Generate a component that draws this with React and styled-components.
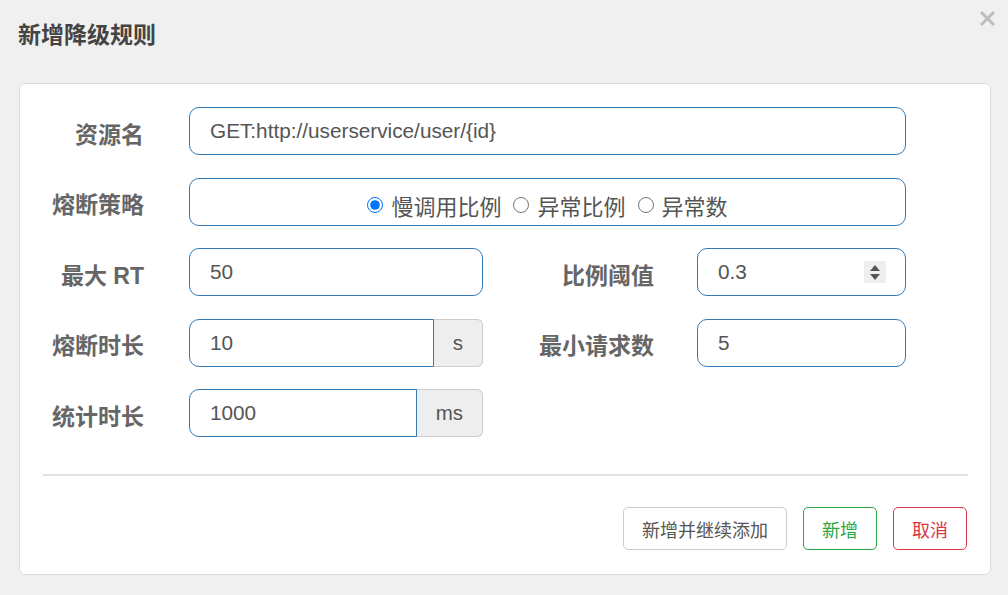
import React from 'react';
import styled, { createGlobalStyle } from 'styled-components';

const GlobalStyle = createGlobalStyle`
  html, body {
    margin: 0;
    padding: 0;
    background: #f0f0f0;
  }
  body {
    font-family: "Liberation Sans", "Noto Sans CJK SC", sans-serif;
    color: #555;
  }
  * { box-sizing: border-box; }
`;

const Page = styled.div`
  width: 1008px;
  height: 595px;
  padding: 0 12px 0 19px;
  overflow: hidden;
`;

const Header = styled.div`
  height: 83px;
  display: flex;
  justify-content: space-between;
  align-items: flex-start;
`;

const Title = styled.h3`
  margin: 20px 0 0 -1px;
  font-size: 23px;
  line-height: 30px;
  font-weight: bold;
  color: #444;
`;

const Close = styled.button`
  margin-top: 10px;
  padding: 0;
  width: 17px;
  height: 17px;
  border: none;
  background: transparent;
  cursor: pointer;
  display: flex;
`;

const Card = styled.div`
  width: 972px;
  background: #fff;
  border: 1px solid #ddd;
  border-radius: 6px;
  padding: 23px 0 24px 0;
`;

const Form = styled.div`
  display: flex;
  flex-direction: column;
  gap: 22.5px;
`;

const Row = styled.div`
  display: grid;
  grid-template-columns: 169px 294px 214px 209px;
  align-items: center;
`;

const Label = styled.label`
  text-align: right;
  padding-top: 3px;
  padding-right: ${p => p.$pad || 45}px;
  font-size: 23px;
  font-weight: bold;
  color: #666;
  white-space: nowrap;
`;

const Input = styled.input`
  width: 100%;
  height: 48px;
  border: 1px solid #337ab7;
  border-radius: ${p => (p.$grouped ? '10px 0 0 10px' : '10px')};
  padding: 0 20px;
  font-family: inherit;
  font-size: 20.75px;
  color: #555;
  background: #fff;
  outline: none;
  grid-column: ${p => (p.$wide ? '2 / 5' : 'auto')};
`;

const Group = styled.div`
  display: flex;
  height: 48px;
  position: relative;
`;

const Addon = styled.span`
  display: flex;
  align-items: center;
  padding: 0 19px;
  background: #eee;
  border: 1px solid #ccc;
  border-left: none;
  border-radius: 0 6px 6px 0;
  font-size: 20.5px;
  color: #555;
`;

const RadioBox = styled.div`
  grid-column: 2 / 5;
  height: 48px;
  border: 1px solid #337ab7;
  border-radius: 10px;
  display: flex;
  align-items: center;
  justify-content: center;
  gap: 12px;
  padding-top: 7px;
`;

const RadioItem = styled.label`
  display: flex;
  align-items: center;
  gap: 8px;
  font-size: 22px;
  color: #555;

  input {
    width: 16px;
    height: 16px;
    margin: 0;
  }
`;

const Spinner = styled.div`
  position: absolute;
  right: 20px;
  top: 13px;
  width: 22px;
  height: 22px;
  background: #efefef;
  display: flex;
  flex-direction: column;
  align-items: center;
  justify-content: center;
  gap: 3px;
`;

const Arrow = styled.span`
  width: 0;
  height: 0;
  border-left: 5px solid transparent;
  border-right: 5px solid transparent;
  ${p => (p.$down ? 'border-top: 6px solid #555;' : 'border-bottom: 6px solid #555;')}
`;

const Divider = styled.hr`
  margin: 37px 22px 0 23px;
  border: none;
  border-top: 2px solid #e2e2e2;
`;

const Footer = styled.div`
  display: flex;
  justify-content: flex-end;
  gap: 16px;
  margin-top: 31px;
  padding-right: 23px;
`;

const tones = {
  default: { color: '#555', border: '#ccc' },
  success: { color: '#28a745', border: '#28a745' },
  danger: { color: '#dc3545', border: '#dc3545' },
};

const Button = styled.button`
  height: 43px;
  padding: 0 18px;
  background: #fff;
  border: 1px solid ${p => tones[p.$tone].border};
  color: ${p => tones[p.$tone].color};
  border-radius: 5px;
  font-family: "Noto Sans CJK SC", sans-serif;
  font-size: 18px;
  cursor: pointer;
`;

export default function App() {
  return (
    <>
      <GlobalStyle />
      <Page>
        <Header>
          <Title>新增降级规则</Title>
          <Close aria-label="关闭">
            <svg width="17" height="17" viewBox="0 0 17 17">
              <path d="M2 2 L15 15 M15 2 L2 15" stroke="#bdbdbd" strokeWidth="3" />
            </svg>
          </Close>
        </Header>
        <Card>
          <Form>
            <Row>
              <Label>资源名</Label>
              <Input $wide defaultValue="GET:http://userservice/user/{id}" />
            </Row>
            <Row>
              <Label>熔断策略</Label>
              <RadioBox>
                <RadioItem><input type="radio" name="grade" defaultChecked />慢调用比例</RadioItem>
                <RadioItem><input type="radio" name="grade" />异常比例</RadioItem>
                <RadioItem><input type="radio" name="grade" />异常数</RadioItem>
              </RadioBox>
            </Row>
            <Row>
              <Label>最大 RT</Label>
              <Input defaultValue="50" />
              <Label $pad={43}>比例阈值</Label>
              <Group>
                <Input defaultValue="0.3" />
                <Spinner>
                  <Arrow />
                  <Arrow $down />
                </Spinner>
              </Group>
            </Row>
            <Row>
              <Label>熔断时长</Label>
              <Group>
                <Input $grouped defaultValue="10" />
                <Addon>s</Addon>
              </Group>
              <Label $pad={43}>最小请求数</Label>
              <Input defaultValue="5" />
            </Row>
            <Row>
              <Label>统计时长</Label>
              <Group>
                <Input $grouped defaultValue="1000" />
                <Addon>ms</Addon>
              </Group>
            </Row>
          </Form>
          <Divider />
          <Footer>
            <Button $tone="default">新增并继续添加</Button>
            <Button $tone="success">新增</Button>
            <Button $tone="danger">取消</Button>
          </Footer>
        </Card>
      </Page>
    </>
  );
}
